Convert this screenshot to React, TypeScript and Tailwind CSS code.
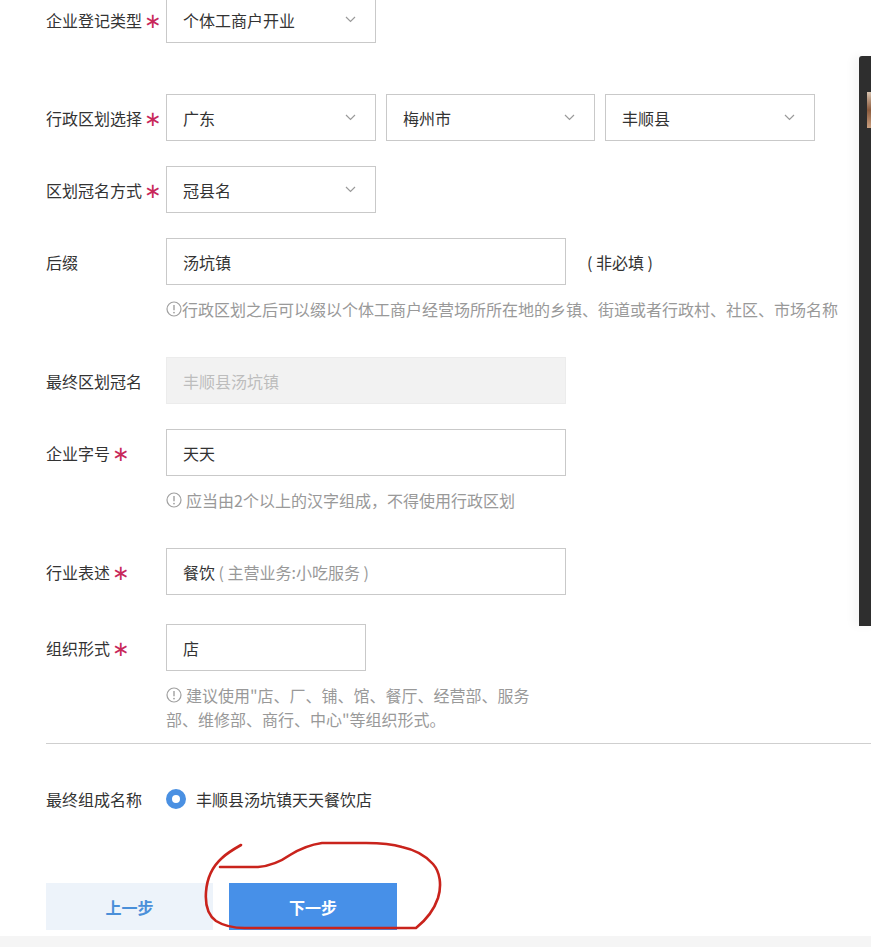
import React from "react";

const Star = () => (
  <span
    className="text-[#c8285a] ml-[2px] text-[21px] leading-none relative top-[2px]"
    style={{ fontFamily: '"DejaVu Sans", sans-serif' }}
  >
    ∗
  </span>
);

const Chevron = () => (
  <svg width="11" height="7" viewBox="0 0 11 7" className="shrink-0">
    <polyline points="1,1 5.5,5.5 10,1" fill="none" stroke="#9a9a9a" strokeWidth="1.2" />
  </svg>
);

const Info = () => (
  <svg width="16" height="16" viewBox="0 0 16 16" className="inline-block align-[-2px] shrink-0">
    <circle cx="8" cy="8" r="7" fill="none" stroke="#a0a0a0" strokeWidth="1.2" />
    <line x1="8" y1="4" x2="8" y2="9.3" stroke="#a0a0a0" strokeWidth="1.4" />
    <circle cx="8" cy="11.6" r="0.9" fill="#a0a0a0" />
  </svg>
);

const Select = ({ text, w }: { text: string; w: string }) => (
  <div className={`${w} h-[47px] border border-[#c9c9c9] bg-white flex items-center justify-between pl-[16px] pr-[19px]`}>
    <span>{text}</span>
    <Chevron />
  </div>
);

const Label = ({ children }: { children: React.ReactNode }) => (
  <div className="w-[120px] shrink-0 leading-[24px] whitespace-nowrap flex items-center">{children}</div>
);

export default function App() {
  return (
    <div
      className="relative h-[947px] overflow-hidden bg-white text-[16px] text-[#333]"
      style={{ fontFamily: '"Noto Sans CJK SC", "Noto Sans", sans-serif' }}
    >
      <div className="pl-[46px]">
        {/* Row 1 */}
        <div className="flex items-center h-[47px] mt-[-4px]">
          <Label>
            企业登记类型<Star />
          </Label>
          <Select text="个体工商户开业" w="w-[210px]" />
        </div>

        {/* Row 2 */}
        <div className="flex items-center h-[47px] mt-[51px]">
          <Label>
            行政区划选择<Star />
          </Label>
          <div className="flex gap-[10px]">
            <Select text="广东" w="w-[210px]" />
            <Select text="梅州市" w="w-[209px]" />
            <Select text="丰顺县" w="w-[210px]" />
          </div>
        </div>

        {/* Row 3 */}
        <div className="flex items-center h-[47px] mt-[25px]">
          <Label>
            区划冠名方式<Star />
          </Label>
          <Select text="冠县名" w="w-[210px]" />
        </div>

        {/* Row 4 */}
        <div className="flex items-center h-[47px] mt-[25px]">
          <Label>后缀</Label>
          <div className="w-[400px] h-[47px] border border-[#c9c9c9] flex items-center pl-[16px]">汤坑镇</div>
          <span className="ml-[21px] whitespace-pre">( 非必填 )</span>
        </div>
        <div className="ml-[120px] mt-[12px] leading-[24px] text-[#999] flex items-center whitespace-nowrap">
          <Info />
          <span>行政区划之后可以缀以个体工商户经营场所所在地的乡镇、街道或者行政村、社区、市场名称</span>
        </div>

        {/* Row 5 */}
        <div className="flex items-center h-[47px] mt-[36px]">
          <Label>最终区划冠名</Label>
          <div className="w-[400px] h-[47px] border border-[#ececec] bg-[#f2f2f2] flex items-center pl-[16px] text-[#bdbdbd]">
            丰顺县汤坑镇
          </div>
        </div>

        {/* Row 6 */}
        <div className="flex items-center h-[47px] mt-[25px]">
          <Label>
            企业字号<Star />
          </Label>
          <div className="w-[400px] h-[47px] border border-[#c9c9c9] flex items-center pl-[16px]">天天</div>
        </div>
        <div className="ml-[120px] mt-[12px] leading-[24px] text-[#999] flex items-center gap-[4px] whitespace-nowrap">
          <Info />
          <span>应当由2个以上的汉字组成，不得使用行政区划</span>
        </div>

        {/* Row 7 */}
        <div className="flex items-center h-[47px] mt-[36px]">
          <Label>
            行业表述<Star />
          </Label>
          <div className="w-[400px] h-[47px] border border-[#c9c9c9] flex items-center pl-[16px] whitespace-pre">
            餐饮<span className="text-[#999]"> ( 主营业务:小吃服务 )</span>
          </div>
        </div>

        {/* Row 8 */}
        <div className="flex items-center h-[47px] mt-[29px]">
          <Label>
            组织形式<Star />
          </Label>
          <div className="w-[200px] h-[47px] border border-[#c9c9c9] flex items-center pl-[16px]">店</div>
        </div>
        <div className="ml-[120px] mt-[12px] leading-[24px] text-[#999] whitespace-nowrap">
          <div className="flex items-center gap-[4px]">
            <Info />
            <span>建议使用"店、厂、铺、馆、餐厅、经营部、服务</span>
          </div>
          <div>部、维修部、商行、中心"等组织形式。</div>
        </div>

        {/* Divider */}
        <div className="mt-[12px] h-px bg-[#cfcfcf]" />

        {/* Final name */}
        <div className="flex items-center h-[24px] mt-[43px]">
          <Label>最终组成名称</Label>
          <div className="flex items-center gap-[10px]">
            <span className="w-[20px] h-[20px] rounded-full border-[6px] border-[#4a90e2] bg-white box-border" />
            <span>丰顺县汤坑镇天天餐饮店</span>
          </div>
        </div>

        {/* Buttons */}
        <div className="flex gap-[16px] mt-[72px]">
          <button className="w-[167px] h-[47px] bg-[#edf3fa] text-[#4a8fd9] font-bold text-[16px]">上一步</button>
          <button className="w-[168px] h-[47px] bg-[#4790e8] text-white font-bold text-[16px]">下一步</button>
        </div>
      </div>

      {/* Bottom strip */}
      <div className="mt-[6px] h-[20px] bg-[#f5f5f5]" />

      {/* Right floating dark panel */}
      <div className="absolute left-[859px] top-[56px] w-[20px] h-[570px] bg-[#2e2e2e] rounded-tl-[3px] shadow-[-6px_0_10px_rgba(0,0,0,0.04)]">
        <div className="absolute left-[8px] top-[36px] w-[10px] h-[36px] bg-gradient-to-b from-[#d8c4b0] via-[#8a5a3c] to-[#caa080]" />
      </div>

      {/* Red hand-drawn annotation */}
      <svg className="absolute left-0 top-0 pointer-events-none" width="871" height="947" viewBox="0 0 871 947">
        <path
          d="M241,845 C234,849 227,853 222,858 C213,866 207,878 206,892 C205,905 208,915 216,921 C224,926 234,928 245,928 L416,928 C426,920 434,910 438,898 C442,885 440,872 433,864 C426,856 416,850 402,847 C392,844 380,843 366,843 L322,843 C308,845 298,850 290,855 C280,862 270,866 258,867 L220,867"
          fill="none"
          stroke="#c9231c"
          strokeWidth="2.6"
          strokeLinecap="round"
          strokeLinejoin="round"
        />
      </svg>
    </div>
  );
}
